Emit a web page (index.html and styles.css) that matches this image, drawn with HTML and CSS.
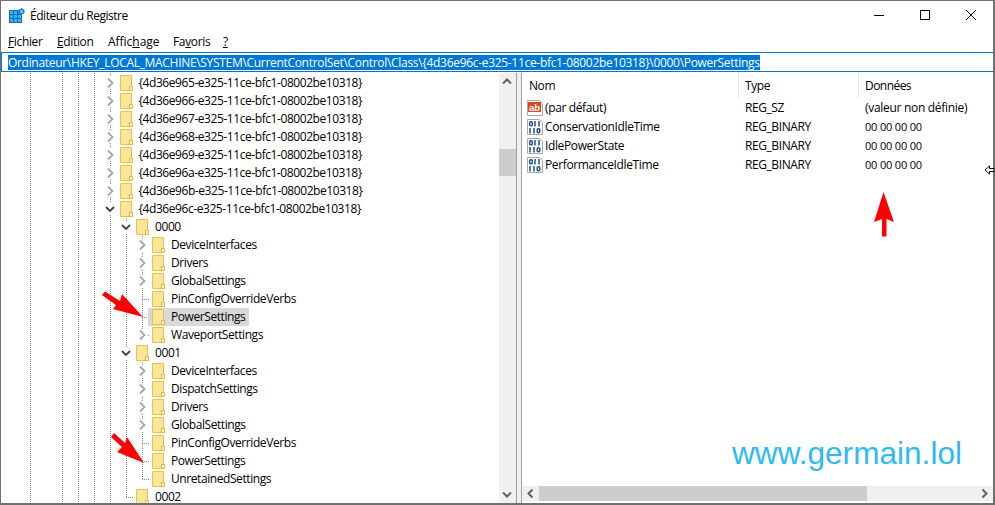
FILE: index.html
```html
<!DOCTYPE html>
<html lang="fr">
<head>
<meta charset="utf-8">
<title>Éditeur du Registre</title>
<link rel="stylesheet" href="styles.css">
</head>
<body>
<svg class="defs" width="0" height="0" aria-hidden="true">
  <symbol id="folder" viewBox="0 0 13 16">
    <path d="M.5.5h11v15H.5z" fill="#fde597" stroke="#eac04f"/>
    <path d="M9.5 15.5v-4h3v4z" fill="#fff3c4" stroke="#e5b53b"/>
  </symbol>
  <symbol id="chev-r" viewBox="0 0 10 12"><path d="M3 1.500 7.500 6 3 10.500" fill="none" stroke="#a6a6a6" stroke-width="1.8"/></symbol>
  <symbol id="chev-d" viewBox="0 0 10 12"><path d="M1 4l4 4 4-4" fill="none" stroke="#404040" stroke-width="1.8"/></symbol>
  <symbol id="bin" viewBox="0 0 16 16">
    <path d="M.5.5h12l3 3v12H.5z" fill="#fff" stroke="#a9a9a9"/>
    <g fill="none" stroke="#1d4f9e" stroke-width="1.5">
      <rect x="2.700" y="2.700" width="2.600" height="4" rx="1"/>
      <path d="M8 2v5.500M12 2v5.500M3 9v5.500M7 9v5.500"/>
      <rect x="10.200" y="9.700" width="2.600" height="4" rx="1"/>
    </g>
  </symbol>
</svg>

<div class="window">
  <header class="titlebar">
    <svg class="app-icon" width="16" height="16" viewBox="0 0 16 16" aria-hidden="true">
      <rect x="0" y="2" width="13" height="13" fill="#0f6cc0"/>
      <g fill="#35b4f2">
        <rect x="1" y="3" width="3" height="3"/><rect x="5" y="3" width="3" height="3"/>
        <rect x="1" y="7" width="3" height="3"/><rect x="5" y="7" width="3" height="3"/><rect x="9" y="7" width="3" height="3"/>
        <rect x="1" y="11" width="3" height="3"/><rect x="5" y="11" width="3" height="3"/><rect x="9" y="11" width="3" height="3"/>
      </g>
      <path d="M12.500 0l3 1.700v3.300l-3 1.800-3-1.800V1.700z" fill="#1b8ed8"/>
      <path d="M12.500 2l1.300.8v1.500l-1.300.8-1.300-.8V2.800z" fill="#7fd0f7"/>
    </svg>
    <span class="title">Éditeur du Registre</span>
    <div class="controls">
      <svg class="ctl" width="46" height="12" viewBox="0 0 46 12" aria-hidden="true"><path d="M18 6.500h10" stroke="#000"/></svg>
      <svg class="ctl" width="46" height="12" viewBox="0 0 46 12" aria-hidden="true"><path d="M18.500 1.500h9v9h-9z" fill="none" stroke="#000"/></svg>
      <svg class="ctl" width="46" height="12" viewBox="0 0 46 12" aria-hidden="true"><path d="M18 1l10 10M28 1 18 11" stroke="#000" fill="none"/></svg>
    </div>
  </header>

  <nav class="menu">
    <span class="m m-fichier"><u>F</u>ichier</span>
    <span class="m m-edition"><u>E</u>dition</span>
    <span class="m m-affichage">Affic<u>h</u>age</span>
    <span class="m m-favoris">Fa<u>v</u>oris</span>
    <span class="m"><u>?</u></span>
  </nav>

  <div class="address"><span class="path">Ordinateur\HKEY_LOCAL_MACHINE\SYSTEM\CurrentControlSet\Control\Class\{4d36e96c-e325-11ce-bfc1-08002be10318}\0000\PowerSettings</span></div>

  <main class="panes">
    <section class="left">
      <div class="tree">
        <div class="row l1"><span class="slot"><svg width="10" height="12"><use href="#chev-r"/></svg></span><span class="item guid"><svg class="fld"><use href="#folder"/></svg>{4d36e965-e325-11ce-bfc1-08002be10318}</span></div>
        <div class="row l1"><span class="slot"><svg width="10" height="12"><use href="#chev-r"/></svg></span><span class="item guid"><svg class="fld"><use href="#folder"/></svg>{4d36e966-e325-11ce-bfc1-08002be10318}</span></div>
        <div class="row l1"><span class="slot"><svg width="10" height="12"><use href="#chev-r"/></svg></span><span class="item guid"><svg class="fld"><use href="#folder"/></svg>{4d36e967-e325-11ce-bfc1-08002be10318}</span></div>
        <div class="row l1"><span class="slot"><svg width="10" height="12"><use href="#chev-r"/></svg></span><span class="item guid"><svg class="fld"><use href="#folder"/></svg>{4d36e968-e325-11ce-bfc1-08002be10318}</span></div>
        <div class="row l1"><span class="slot"><svg width="10" height="12"><use href="#chev-r"/></svg></span><span class="item guid"><svg class="fld"><use href="#folder"/></svg>{4d36e969-e325-11ce-bfc1-08002be10318}</span></div>
        <div class="row l1"><span class="slot"><svg width="10" height="12"><use href="#chev-r"/></svg></span><span class="item guid"><svg class="fld"><use href="#folder"/></svg>{4d36e96a-e325-11ce-bfc1-08002be10318}</span></div>
        <div class="row l1"><span class="slot"><svg width="10" height="12"><use href="#chev-r"/></svg></span><span class="item guid"><svg class="fld"><use href="#folder"/></svg>{4d36e96b-e325-11ce-bfc1-08002be10318}</span></div>
        <div class="row l1"><span class="slot"><svg width="10" height="12"><use href="#chev-d"/></svg></span><span class="item guid"><svg class="fld"><use href="#folder"/></svg>{4d36e96c-e325-11ce-bfc1-08002be10318}</span></div>

        <div class="row l2"><span class="slot"><svg width="10" height="12"><use href="#chev-d"/></svg></span><span class="item"><svg class="fld"><use href="#folder"/></svg>0000</span></div>
        <div class="row l3"><span class="slot"><svg width="10" height="12"><use href="#chev-r"/></svg></span><span class="item"><svg class="fld"><use href="#folder"/></svg>DeviceInterfaces</span></div>
        <div class="row l3"><span class="slot"><svg width="10" height="12"><use href="#chev-r"/></svg></span><span class="item"><svg class="fld"><use href="#folder"/></svg>Drivers</span></div>
        <div class="row l3"><span class="slot"><svg width="10" height="12"><use href="#chev-r"/></svg></span><span class="item"><svg class="fld"><use href="#folder"/></svg>GlobalSettings</span></div>
        <div class="row l3 leaf"><span class="slot"></span><span class="item"><svg class="fld"><use href="#folder"/></svg>PinConfigOverrideVerbs</span></div>
        <div class="row l3 leaf"><span class="slot"></span><span class="item selected"><svg class="fld"><use href="#folder"/></svg>PowerSettings</span></div>
        <div class="row l3 end"><span class="slot"><svg width="10" height="12"><use href="#chev-r"/></svg></span><span class="item"><svg class="fld"><use href="#folder"/></svg>WaveportSettings</span></div>

        <div class="row l2"><span class="slot"><svg width="10" height="12"><use href="#chev-d"/></svg></span><span class="item"><svg class="fld"><use href="#folder"/></svg>0001</span></div>
        <div class="row l3"><span class="slot"><svg width="10" height="12"><use href="#chev-r"/></svg></span><span class="item"><svg class="fld"><use href="#folder"/></svg>DeviceInterfaces</span></div>
        <div class="row l3"><span class="slot"><svg width="10" height="12"><use href="#chev-r"/></svg></span><span class="item"><svg class="fld"><use href="#folder"/></svg>DispatchSettings</span></div>
        <div class="row l3"><span class="slot"><svg width="10" height="12"><use href="#chev-r"/></svg></span><span class="item"><svg class="fld"><use href="#folder"/></svg>Drivers</span></div>
        <div class="row l3"><span class="slot"><svg width="10" height="12"><use href="#chev-r"/></svg></span><span class="item"><svg class="fld"><use href="#folder"/></svg>GlobalSettings</span></div>
        <div class="row l3 leaf"><span class="slot"></span><span class="item"><svg class="fld"><use href="#folder"/></svg>PinConfigOverrideVerbs</span></div>
        <div class="row l3 leaf"><span class="slot"></span><span class="item"><svg class="fld"><use href="#folder"/></svg>PowerSettings</span></div>
        <div class="row l3 leaf end"><span class="slot"></span><span class="item"><svg class="fld"><use href="#folder"/></svg>UnretainedSettings</span></div>

        <div class="row l2 leaf2"><span class="slot"></span><span class="item"><svg class="fld"><use href="#folder"/></svg>0002</span></div>
      </div>
      <div class="vscroll">
        <svg class="arrow" width="16" height="17" viewBox="0 0 16 17" aria-hidden="true"><path d="M4 10.500l4-4 4 4" fill="none" stroke="#606060" stroke-width="2"/></svg>
        <div class="vtrack"><div class="vthumb"></div></div>
        <svg class="arrow" width="16" height="17" viewBox="0 0 16 17" aria-hidden="true"><path d="M4 6.500l4 4 4-4" fill="none" stroke="#606060" stroke-width="2"/></svg>
      </div>
    </section>

    <div class="splitter"></div>

    <section class="right">
      <div class="list">
        <div class="list-head">
          <span class="h h-name">Nom</span>
          <span class="h h-type">Type</span>
          <span class="h h-data">Données</span>
        </div>
        <div class="value"><span class="v-name"><svg class="vi" width="16" height="16" viewBox="0 0 16 16" aria-hidden="true"><path d="M.5.5h12l3 3v12H.5z" fill="#fff" stroke="#a9a9a9"/><rect x="1" y="2" width="13" height="10" fill="#d9481c"/><text x="2" y="10.500" class="ab-text">ab</text></svg>(par défaut)</span><span class="v-type">REG_SZ</span><span class="v-text">(valeur non définie)</span></div>
        <div class="value"><span class="v-name"><svg class="vi"><use href="#bin"/></svg>ConservationIdleTime</span><span class="v-type">REG_BINARY</span><span class="v-hex">00 00 00 00</span></div>
        <div class="value"><span class="v-name"><svg class="vi"><use href="#bin"/></svg>IdlePowerState</span><span class="v-type">REG_BINARY</span><span class="v-hex">00 00 00 00</span></div>
        <div class="value"><span class="v-name"><svg class="vi"><use href="#bin"/></svg>PerformanceIdleTime</span><span class="v-type">REG_BINARY</span><span class="v-hex">00 00 00 00</span></div>
      </div>
      <div class="hscroll">
        <svg class="arrow" width="17" height="15" viewBox="0 0 17 15" aria-hidden="true"><path d="M10.500 3.500l-4 4 4 4" fill="none" stroke="#606060" stroke-width="2"/></svg>
        <div class="htrack"><div class="hthumb"></div></div>
        <svg class="arrow" width="17" height="15" viewBox="0 0 17 15" aria-hidden="true"><path d="M6.500 3.500l4 4-4 4" fill="none" stroke="#606060" stroke-width="2"/></svg>
      </div>
    </section>
  </main>
</div>

<svg class="overlay" width="995" height="505" viewBox="0 0 995 505" aria-hidden="true">
  <path d="M143 317 122 294l-2 7-15-9.500-3 3.500 14 10-3 4z" fill="#f00"/>
  <path d="M144 463 127 437l-2 6-11-10-3 4 11 10-5 5z" fill="#f00"/>
  <path d="M883.500 192 874 222l8-3v17.500h4.500V219l7.500 3z" fill="#f00"/>
  <path d="M985 170l4.500-4v2.500h4.500v3h-4.500v2.500z" fill="#fff" stroke="#000" stroke-width="1"/>
</svg>
<div class="watermark">www.germain.lol</div>
</body>
</html>
```
FILE: styles.css
```css
:root {
  --v: repeating-linear-gradient(#8c8c8c 0 1px, transparent 1px 2px);
  --h: repeating-linear-gradient(90deg, #8c8c8c 0 1px, transparent 1px 2px);
}
* { box-sizing: border-box; }
html, body { margin: 0; height: 100%; }
body {
  position: relative;
  width: 995px;
  height: 505px;
  overflow: hidden;
  background: #fff;
  font: 12px/18px "Open Sans", "Noto Sans", sans-serif;
  letter-spacing: -.42px;
  color: #000;
}
.defs { position: absolute; }
.window {
  display: flex;
  flex-direction: column;
  width: 995px;
  height: 505px;
  border: solid #707070;
  border-width: 1px 2px 2px 1px;
  background: #fff;
}
.titlebar {
  display: flex;
  align-items: center;
  height: 30px;
  padding-left: 8px;
  flex: none;
}
.app-icon { flex: none; }
.title { margin-left: 5px; letter-spacing: -.46px; }
.controls {
  display: flex;
  align-self: flex-start;
  margin: 8px -1px 0 auto;
}
.ctl { display: block; }
.menu {
  display: flex;
  height: 21px;
  padding-left: 7px;
  align-items: center;
  flex: none;
}
.m { letter-spacing: -.35px; }
.m-fichier { width: 49px; }
.m-edition { width: 51px; }
.m-affichage { width: 65px; letter-spacing: -.02px; }
.m-favoris { width: 50px; }
.address {
  flex: none;
  height: 20px;
  border: 1px solid #0a74c4;
  border-right: none;
  background: #fff;
  padding: 0 0 0 6px;
  display: flex;
  align-items: center;
  white-space: nowrap;
  overflow: hidden;
}
.path {
  background: #0078d7;
  color: #fff;
  line-height: 15px;
  height: 15px;
  letter-spacing: -.31px;
}
.panes {
  flex: 1;
  min-height: 0;
  display: flex;
  margin-top: 1px;
}
.left { flex: none; display: flex; width: 515px; min-height: 0; }
.tree {
  flex: none;
  width: 498px;
  overflow: hidden;
  padding-top: 1px;
  background:
    var(--v) 29px 0 / 1px 100% no-repeat,
    var(--v) 61px 0 / 1px 100% no-repeat,
    var(--v) 77px 0 / 1px 100% no-repeat,
    var(--v) 93px 0 / 1px 100% no-repeat,
    var(--v) 109px 0 / 1px 100% no-repeat;
}
.row {
  display: flex;
  height: 18px;
  align-items: center;
  white-space: nowrap;
}
.l1 { padding-left: 104px; }
.l2 {
  padding-left: 120px;
  background: var(--v) 125px 0 / 1px 100% no-repeat;
}
.l3 {
  padding-left: 136px;
  background:
    var(--v) 125px 0 / 1px 100% no-repeat,
    var(--v) 141px 0 / 1px 100% no-repeat;
}
.l3.leaf {
  background:
    var(--v) 125px 0 / 1px 100% no-repeat,
    var(--v) 141px 0 / 1px 100% no-repeat,
    var(--h) 141px 9px / 8px 1px no-repeat;
}
.l3.end {
  background:
    var(--v) 125px 0 / 1px 100% no-repeat,
    var(--v) 141px 0 / 1px 9px no-repeat,
    var(--h) 141px 9px / 8px 1px no-repeat;
}
.l2.leaf2 {
  background:
    var(--v) 125px 0 / 1px 9px no-repeat,
    var(--h) 125px 9px / 8px 1px no-repeat;
}
.slot {
  flex: none;
  width: 10px;
  height: 12px;
  margin-right: 1px;
}
.slot:has(svg) { background: #fff; }
.slot svg { display: block; }
.item {
  display: flex;
  align-items: center;
  height: 18px;
  line-height: 14px;
  padding: 0 4px;
  gap: 6px;
}
.item.guid { gap: 5.5px; letter-spacing: -.43px; }
.item.selected { background: #d9d9d9; }
.fld { flex: none; width: 13px; height: 16px; }
.vscroll {
  flex: none;
  width: 17px;
  background: #f0f0f0;
  display: flex;
  flex-direction: column;
}
.arrow { flex: none; display: block; }
.vtrack { flex: 1; padding-top: 59px; }
.vthumb { height: 27px; background: #cdcdcd; }
.splitter {
  flex: none;
  width: 6px;
  background: #f0f0f0;
  border-left: 1px solid #a0a0a0;
  border-right: 1px solid #a0a0a0;
}
.right {
  flex: 1;
  min-width: 0;
  display: flex;
  flex-direction: column;
}
.list { flex: 1; min-height: 0; }
.list-head {
  display: grid;
  grid-template-columns: 216px 120px 1fr;
  height: 25px;
  align-items: center;
}
.h { height: 25px; line-height: 25px; padding-left: 6px; border-left: 1px solid #e5e5e5; }
.h-name { border-left: none; padding-left: 7px; }
.h-data { letter-spacing: -.55px; }
.value {
  display: grid;
  grid-template-columns: 216px 120px 1fr;
  height: 19px;
  align-items: center;
  white-space: nowrap;
}
.value > span:not(.v-name) { padding-left: 7px; }
.v-name { display: flex; align-items: center; gap: 2px; padding-left: 5px; letter-spacing: -.37px; }
.v-text { letter-spacing: -.3px; }
.v-hex { font-size: 11px; letter-spacing: -.18px; }
.vi { flex: none; width: 16px; height: 16px; }
.ab-text { font: 700 9.500px "Liberation Sans", sans-serif; fill: #fff; letter-spacing: 0; }
.hscroll {
  flex: none;
  height: 15px;
  margin-bottom: 2px;
  display: flex;
  background: #f0f0f0;
}
.htrack { flex: 1; padding-right: 109px; }
.hthumb { height: 100%; background: #cdcdcd; }
.overlay { position: absolute; left: 0; top: 0; pointer-events: none; }
.watermark {
  position: absolute;
  left: 732px;
  top: 434px;
  font: 31.6px/38px "Liberation Sans", sans-serif;
  letter-spacing: 0;
  color: #2fb9f5;
}
```
